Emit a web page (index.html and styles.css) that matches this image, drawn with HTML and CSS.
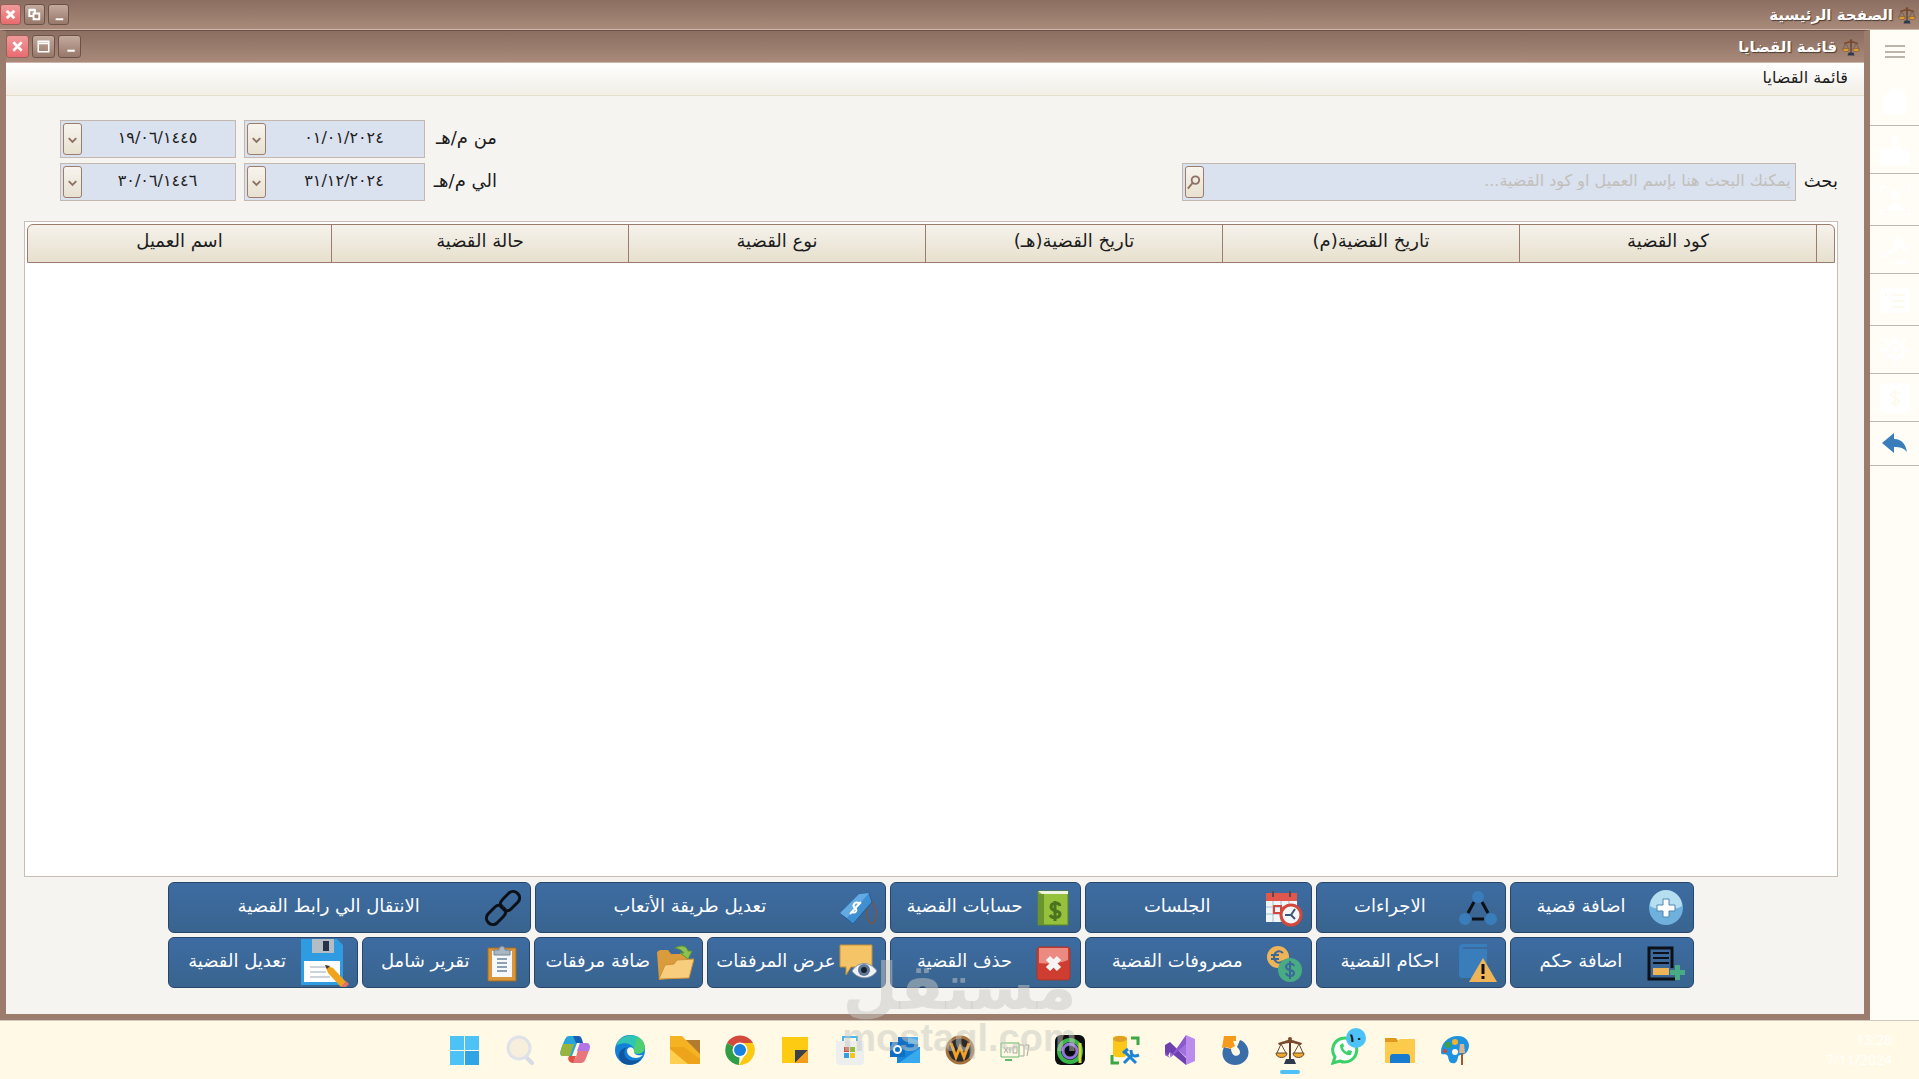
FILE: index.html
```html
<!DOCTYPE html>
<html lang="ar" dir="rtl">

<head>
    <meta charset="UTF-8">
    <title>قائمة القضايا</title>
    <link rel="stylesheet" href="styles.css">
</head>

<body>
    <!-- shared scales icon -->
    <svg class="defs" width="0" height="0">
        <symbol id="scales" viewBox="0 0 30 30">
            <path d="M14 3h2v22h-2z" fill="#5b3a29" />
            <path d="M3 8c5-1 7-3 12-3s7 2 12 3l-1 2c-5-1-7-2-11-2s-6 1-11 2z" fill="#7a4a2c" />
            <path d="M6 9L2 18M6 9l5 9M24 9l-5 9M24 9l4 9" stroke="#6b4a33" stroke-width="1" fill="none" />
            <path d="M1 18h11c0 6-11 6-11 0zM18 18h11c0 6-11 6-11 0z" fill="#f0a92b" stroke="#6b4a33" />
            <circle cx="15" cy="4" r="2" fill="#7a4a2c" />
            <path d="M11 24h8l2 5H9z" fill="#2c3a4b" />
        </symbol>
    </svg>

    <header class="titlebar">
        <svg class="title-icon"><use href="#scales" /></svg>
        <h1>الصفحة الرئيسية</h1>
        <div class="window-controls small">
            <button type="button" aria-label="تصغير"><svg viewBox="0 0 20 20"><path d="M7 15h8" stroke="#fff" stroke-width="2" /></svg></button>
            <button type="button" aria-label="استعادة"><svg viewBox="0 0 20 20"><path d="M4.500 5.500h6v6h-6zM4 5h7" stroke="#fff" stroke-width="2" fill="none" /><path d="M9 9h6v6H9z" fill="#a58474" stroke="#fff" stroke-width="2" /></svg></button>
            <button type="button" class="close" aria-label="إغلاق"><svg viewBox="0 0 20 20"><path d="M6 6l8 8M14 6l-8 8" stroke="#fff" stroke-width="3" /></svg></button>
        </div>
    </header>

    <div class="workspace">
        <nav class="sidebar">
            <a href="#" class="menu" aria-label="القائمة"><svg viewBox="0 0 32 32"><path d="M6 10h20M6 16h20M6 21h20" stroke="#bbb5ac" stroke-width="2" /></svg></a>
            <a href="#" class="tall" aria-label="الرئيسية"><svg viewBox="0 0 32 32"><path d="M16 2l6 5V5h4v6l2 3v16H4V13z" /></svg></a>
            <a href="#" aria-label="العملاء"><svg viewBox="0 0 32 32"><circle cx="16" cy="6" r="4" /><path d="M10 15c0-6 12-6 12 0h9v16H1V15z" /></svg></a>
            <a href="#" class="tall" aria-label="الموظفين"><svg viewBox="0 0 32 32"><circle cx="16" cy="11" r="5" /><path d="M8 27c0-5 4-5 6-8h4c2 3 6 3 6 8z" /><path d="M2 8V3h5M25 3h5v5M2 25v5h5M25 30h5v-5" fill="none" stroke="#fff" stroke-width="2" /></svg></a>
            <a href="#" aria-label="القضايا"><svg viewBox="0 0 32 32"><path d="M14 6l6-4 10 12-5 4-3-5L3 25l-2-3 16-10zM17 27h14v3H17z" /></svg></a>
            <a href="#" class="tall" aria-label="التقارير"><svg viewBox="0 0 32 32"><rect x="1" y="4" width="30" height="25" rx="3" /><path d="M13 11h13M13 17h13M13 23h13M7 9v3" stroke="#fffaee" stroke-width="2" /></svg></a>
            <a href="#" aria-label="الإعدادات"><svg viewBox="0 0 32 32"><circle cx="16" cy="16" r="8" fill="none" stroke="#fff" stroke-width="3" /><circle cx="16" cy="16" r="3" /><path d="M16 1v6M16 25v6M1 16h6M25 16h6M5 5l5 5M22 22l5 5M27 5l-5 5M10 22l-5 5" stroke="#fff" stroke-width="3" /></svg></a>
            <a href="#" aria-label="الحسابات"><svg viewBox="0 0 32 32"><rect x="1" y="1" width="30" height="30" rx="5" /><path d="M20 12c-1-3-8-3-8 1s8 2 8 6-7 4-8 1M16 8v16" fill="none" stroke="#fffaee" stroke-width="2" /></svg></a>
            <a href="#" class="menu back" aria-label="رجوع"><svg viewBox="0 0 32 32"><path d="M3 15L15 5v6c9 0 12 7 13 13-3-4-7-5-13-5v6z" fill="#3a7dbb" /></svg></a>
        </nav>

        <main class="window">
            <header class="titlebar inner">
                <svg class="title-icon"><use href="#scales" /></svg>
                <h2>قائمة القضايا</h2>
                <div class="window-controls">
                    <button type="button" aria-label="تصغير"><svg viewBox="0 0 20 20"><path d="M8 14h7" stroke="#fff" stroke-width="2" /></svg></button>
                    <button type="button" aria-label="تكبير"><svg viewBox="0 0 20 20"><path d="M5 5h10v10H5zM5 7h10" stroke="#fff" stroke-width="1.500" fill="none" /></svg></button>
                    <button type="button" class="close" aria-label="إغلاق"><svg viewBox="0 0 20 20"><path d="M6 6l8 8M14 6l-8 8" stroke="#fff" stroke-width="2.500" /></svg></button>
                </div>
            </header>
            <div class="menubar">قائمة القضايا</div>

            <div class="content">
                <form class="filters">
                    <div class="search">
                        <label for="search">بحث</label>
                        <div class="field">
                            <input type="text" id="search" placeholder="يمكنك البحث هنا بإسم العميل او كود القضية...">
                            <button type="button" aria-label="بحث"><svg viewBox="0 0 18 30"><circle cx="10" cy="13" r="4" /><path d="M7 16l-5 6" /></svg></button>
                        </div>
                    </div>
                    <div class="dates">
                        <label for="from">من م/هـ</label>
                        <div class="field">
                            <input type="text" id="from" value="٠١/٠١/٢٠٢٤">
                            <button type="button" aria-label="اختيار"><svg viewBox="0 0 18 30"><path d="M5 14l4 4 4-4" /></svg></button>
                        </div>
                        <div class="field">
                            <input type="text" aria-label="من هـ" value="١٩/٠٦/١٤٤٥">
                            <button type="button" aria-label="اختيار"><svg viewBox="0 0 18 30"><path d="M5 14l4 4 4-4" /></svg></button>
                        </div>
                        <label for="to">الي م/هـ</label>
                        <div class="field">
                            <input type="text" id="to" value="٣١/١٢/٢٠٢٤">
                            <button type="button" aria-label="اختيار"><svg viewBox="0 0 18 30"><path d="M5 14l4 4 4-4" /></svg></button>
                        </div>
                        <div class="field">
                            <input type="text" aria-label="الي هـ" value="٣٠/٠٦/١٤٤٦">
                            <button type="button" aria-label="اختيار"><svg viewBox="0 0 18 30"><path d="M5 14l4 4 4-4" /></svg></button>
                        </div>
                    </div>
                </form>

                <div class="grid">
                    <table>
                        <thead>
                            <tr>
                                <th class="selector"></th>
                                <th>كود القضية</th>
                                <th>تاريخ القضية(م)</th>
                                <th>تاريخ القضية(هـ)</th>
                                <th>نوع القضية</th>
                                <th>حالة القضية</th>
                                <th>اسم العميل</th>
                            </tr>
                        </thead>
                    </table>
                </div>

                <div class="actions">
                    <div class="row">
                        <button type="button" class="w184"><svg viewBox="0 0 38 38"><circle cx="19" cy="19" r="17" fill="#6fb1dc" /><path d="M3 17a16 16 0 0 1 32 0c-8 5-24 5-32 0z" fill="#b5dff0" /><path d="M16 10h6v6h6v6h-6v6h-6v-6h-6v-6h6z" fill="#fff" stroke="#4c86b4" /></svg><span>اضافة قضية</span></button>
                        <button type="button" class="w190"><svg viewBox="0 0 38 38"><path d="M15 13l-6 11M23 13l6 11M13 30h12" stroke="#0d1117" stroke-width="3" /><g fill="#3a7dbb"><circle cx="19" cy="8" r="6" /><circle cx="6" cy="30" r="6" /><circle cx="32" cy="30" r="6" /></g></svg><span>الاجراءات</span></button>
                        <button type="button" class="w227"><svg viewBox="0 0 38 38"><path d="M1 5h31v28H1z" fill="#f2f5f8" /><path d="M1 4h31v8H1z" fill="#e2574c" /><path d="M8 2v6M25 2v6" stroke="#5c4a4a" stroke-width="2" /><path d="M1 18h31M1 25h31M8 12v21M16 12v21M24 12v21" stroke="#a9bccb" /><path d="M9 17h7v7H9z" fill="none" stroke="#d4483c" stroke-width="2" /><circle cx="26" cy="26" r="10" fill="#f4f7fa" stroke="#d4483c" stroke-width="3" /><path d="M30 20l-4 6h-6M26 26l4 4" stroke="#3c5675" stroke-width="2" fill="none" /></svg><span>الجلسات</span></button>
                        <button type="button" class="w190"><svg viewBox="0 0 38 38"><path d="M4 2h30v34H4z" fill="#96c13c" stroke="#5d8427" /><path d="M4 2h30v3H8z" fill="#eef3e2" /><path d="M4 5h6v31H4z" fill="#6a9430" /><path d="M26 17c-1-4-9-4-9 1s9 3 9 7-8 5-10 1M21 12v20" stroke="#4c7420" stroke-width="3" fill="none" /></svg><span>حسابات القضية</span></button>
                        <button type="button" class="w351"><svg viewBox="0 0 38 38"><path d="M28 8c9 4 12 24 6 26s-8-12-4-21" fill="none" stroke="#6c5a57" stroke-width="2" /><path d="M1 24L20 5l10-1 3 9-19 22z" fill="#3f8fd3" stroke="#245c95" /><path d="M1 24L20 5l10-1-22 25z" fill="#64aae2" /><path d="M20 14c-5-2-7 3-4 5s1 6-4 4M22 13L11 25" stroke="#fff" stroke-width="2" fill="none" /></svg><span>تعديل طريقة الأتعاب</span></button>
                        <button type="button" class="w363"><svg viewBox="0 0 38 38" fill="none" stroke="#0d1117" stroke-width="3" stroke-linecap="round"><path d="M18 19c-3-3-2-6 1-9l6-6c6-5 14 3 9 9l-7 7c-2 2-5 2-7 1" /><path d="M20 19c3 3 2 6-1 9l-6 6c-6 5-14-3-9-9l7-7c2-2 5-2 7-1" /></svg><span>الانتقال الي رابط القضية</span></button>
                    </div>
                    <div class="row">
                        <button type="button" class="w184"><svg viewBox="0 0 38 38"><path d="M25 24V4H2v31h26" fill="none" stroke="#0d1117" stroke-width="3" /><path d="M6 9h16M6 14h16M6 19h16" stroke="#0d1117" stroke-width="2" /><path d="M6 24h16v7H6z" fill="#efb458" /><path d="M28 21h5v5h5v5h-5v5h-5v-5h-5v-5h5z" fill="#48ab83" /></svg><span>اضافة حكم</span></button>
                        <button type="button" class="w190"><svg viewBox="0 0 38 38"><path d="M0 4q0-4 4-4h24v3H4v2h24v29H3q-3 0-3-3z" fill="#3a7dbb" /><path d="M24 14l14 24H10z" fill="#efb458" /><path d="M24 20v10M24 32v3" stroke="#0d1117" stroke-width="3" /></svg><span>احكام القضية</span></button>
                        <button type="button" class="w227"><svg viewBox="0 0 38 38"><circle cx="13" cy="13" r="11" fill="#efb458" /><path d="M18 9c-5-4-9 0-9 4s4 8 9 4M6 11h8M6 15h8" stroke="#3b6899" stroke-width="2" fill="none" /><circle cx="25" cy="26" r="12" fill="#48ab83" /><path d="M29 22c-1-3-8-3-8 1s8 2 8 6-7 4-8 0M25 17v18" stroke="#3b6899" stroke-width="2" fill="none" /></svg><span>مصروفات القضية</span></button>
                        <button type="button" class="w190"><svg viewBox="0 0 38 38"><rect x="3" y="3" width="33" height="33" rx="3" fill="#cf3d31" stroke="#a3392f" /><path d="M5 4h29v12c-9 4-20 4-29 3z" fill="#ea8a80" /><path d="M14 14l11 11M25 14L14 25" stroke="#f7f3f3" stroke-width="6" /></svg><span>حذف القضية</span></button>
                        <button type="button" class="w179"><svg viewBox="0 0 38 38"><path d="M1 1h32v22H12l-5 8v-8H1z" fill="#f4c467" stroke="#c98f35" /><path d="M13 27c6-10 18-10 25 0-6 9-19 9-25 0z" fill="#eef2f6" stroke="#8593a3" /><circle cx="25" cy="26" r="6" fill="#5f7796" /><circle cx="25" cy="26" r="3" fill="#18222f" /></svg><span>عرض المرفقات</span></button>
                        <button type="button" class="w169"><svg viewBox="0 0 38 38"><path d="M1 8l3-2h8l3 4h18v22L3 36z" fill="#d99b3c" /><path d="M3 35l6-14 9-1 3-4 17-1-5 19z" fill="#f8cd7e" stroke="#cf9136" /><path d="M19 4c8-4 12-1 13 3h4l-4 8-8-6h4c-2-3-5-4-9-5z" fill="#8dc153" stroke="#5f9433" /></svg><span>ضافة مرفقات</span></button>
                        <button type="button" class="w168"><svg viewBox="0 0 38 38"><path d="M5 4h28v33H5z" fill="#d9963b" stroke="#a86a23" /><path d="M9 7h20v26H9z" fill="#f6f8fa" /><path d="M14 15h10M14 19h10M14 23h10M14 27h10" stroke="#8da0b4" stroke-width="2" /><path d="M11 6h5c0-5 6-5 6 0h5v5H11z" fill="#a9b7c4" stroke="#74869a" /></svg><span>تقرير شامل</span></button>
                        <button type="button" class="w190 save"><svg viewBox="0 0 48 48"><path d="M0 0h36l6 6v40H0z" fill="#2f9be0" /><path d="M11 0h22v14H11z" fill="#b4bcc4" /><path d="M22 2h6v10h-6z" fill="#24324b" /><path d="M3 22h36v21H3z" fill="#fff" /><path d="M9 28h20M9 33h16M9 38h20" stroke="#ccd3da" stroke-width="2" /><path d="M24 26l8 3 13 14-5 5-13-14z" fill="#f0a41c" /><path d="M24 26l5 1-3 3z" fill="#3a3a3a" /><path d="M40 48l5-6 3 3-4 4z" fill="#e5706b" /></svg><span>تعديل القضية</span></button>
                    </div>
                </div>
            </div>
        </main>
    </div>

    <footer class="taskbar" dir="ltr">
        <div class="apps">
            <svg viewBox="0 0 30 30"><path d="M0 1h14v14H0zM15 1h14v14H15zM0 16h14v14H0z" fill="#4cc2f6" /><path d="M15 16h14v14H15z" fill="#2fa5e5" /></svg>
            <svg viewBox="0 0 30 30"><path d="M20 21l7 7" stroke="#d7dbe4" stroke-width="4" stroke-linecap="round" /><circle cx="14" cy="13" r="11" fill="#f7eedb" stroke="#dfe2e9" stroke-width="3" /></svg>
            <svg viewBox="0 0 30 30"><path d="M9 1h9l4 7h-5l-5 13H3c-5 0-2-7 0-12s3-8 6-8z" fill="#29a6d9" /><path d="M13 1h6c2 0 3 3 4 7h-7z" fill="#1860b5" /><path d="M3 9h11l-4 12H2c-3-2-1-7 1-12z" fill="#96b43e" /><path d="M20 8h6c5 0 4 5 2 10s-3 10-7 10h-9l4-6z" fill="#e9767c" /><path d="M20 8h6c5 0 4 5 3 8H17z" fill="#b276e6" /><path d="M9 21h7l-3 7c-4 0-6-4-4-7z" fill="#dd5240" /></svg>
            <svg viewBox="0 0 30 30"><circle cx="15" cy="15" r="15" fill="#1380d8" /><path d="M1 11C5-3 28-4 30 12c0 9-12 8-11 4 0-8-12-10-18-5z" fill="#31c3b4" /><path d="M22 2c6 3 9 8 7 13s-11 4-10 1 2-9 3-14z" fill="#4fd06f" /><path d="M12 12c-6 5-2 18 14 12-4 6-16 9-21 1-3-6 0-11 7-13z" fill="#11559f" /><path d="M12 16c0-5 7-5 7 0 0 4 4 5 9 4-6 6-16 2-16-4z" fill="#fff9e6" /></svg>
            <svg viewBox="0 0 30 30"><path d="M14 5h16v20H14z" fill="#b27b2f" /><path d="M0 1h12l18 18v10H0z" fill="#f5b324" /><path d="M0 12l14 0 16 12v5H0z" fill="#eda31a" /><path d="M0 14l18 15H0z" fill="#ffd04f" /></svg>
            <svg viewBox="0 0 30 30"><path d="M15 15L2 8A15 15 0 0 1 28 8z" fill="#d34a3c" /><path d="M15 15L2 8a15 15 0 0 0 12 22z" fill="#2f9e46" /><path d="M15 8h13a15 15 0 0 1-14 22l7-12z" fill="#fbc812" /><circle cx="15" cy="15" r="7.500" fill="#fff" /><circle cx="15" cy="15" r="6" fill="#1a82dc" /></svg>
            <svg viewBox="0 0 30 30"><path d="M2 2h26v26H2z" fill="#fccb12" /><path d="M15 15h13L15 28z" fill="#3c3f45" /><path d="M28 15v13H15z" fill="#f09c1c" /></svg>
            <svg viewBox="0 0 30 30"><path d="M8 9V2h14v7" fill="none" stroke="#4ab6ee" stroke-width="2" /><path d="M1 6h28v20q0 4-4 4H5q-4 0-4-4z" fill="#edeeee" /><path d="M9 12h5v5H9z" fill="#d2473a" /><path d="M15 12h5v5h-5z" fill="#8dbb3a" /><path d="M9 18h5v5H9z" fill="#35a0e0" /><path d="M15 18h5v5h-5z" fill="#f8c51c" /></svg>
            <svg viewBox="0 0 30 30"><path d="M8 2h20v12H8z" fill="#1a6fc4" /><path d="M18 2h10v7H18z" fill="#4ab2ee" /><path d="M7 13l23-1v16H7z" fill="#1487dc" /><path d="M30 13v15H9z" fill="#38a9ec" /><rect y="7" width="15" height="15" fill="#0f6fc5" /><circle cx="7.500" cy="14.500" r="3.500" fill="none" stroke="#fff" stroke-width="2" /></svg>
            <svg viewBox="0 0 30 30"><circle cx="15" cy="15" r="13" fill="#282a30" stroke="#a5713c" stroke-width="3" /><path d="M6 8l5 14 4-10 4 10 5-14" fill="none" stroke="#f0a125" stroke-width="3" /></svg>
            <svg viewBox="0 0 30 30" fill="none"><path d="M1 8h18v14H1z" stroke="#67b56b" /><path d="M5 25h7" stroke="#67b56b" stroke-width="2" /><path d="M20 10h4v11h-4M25 10h4l-2 11M4 12l4 6M8 12l-4 6M10 12v6M13 12h4v6h-4z" stroke="#aaa999" /></svg>
            <svg viewBox="0 0 30 30"><rect width="30" height="30" rx="6" fill="#0c0e12" /><circle cx="15" cy="16" r="11" fill="none" stroke="#39b54a" stroke-width="4" /><circle cx="15" cy="16" r="7" fill="none" stroke="#9272dc" stroke-width="3" /><path d="M25 8v20" stroke="#cfd83a" stroke-width="3" /><circle cx="15" cy="16" r="3" fill="#050607" /></svg>
            <svg viewBox="0 0 30 30"><path d="M3 3c0-3 14-3 14 0v17c0 3-14 3-14 0z" fill="#fbc818" /><ellipse cx="10" cy="4" rx="7" ry="3" fill="#e0a028" /><path d="M21 3h7v7M2 20v8h7" fill="none" stroke="#3ba745" stroke-width="3" /><path d="M14 28l9-9M15 17l11 11" stroke="#1d83d4" stroke-width="3" /><path d="M21 15c0 6 3 7 8 5M13 18l5-4" stroke="#1d83d4" stroke-width="3" fill="none" /></svg>
            <svg viewBox="0 0 30 30"><path d="M5 8l16 14V8L5 22z" fill="#a070dc" /><path d="M0 10l5-3 16 16v7L5 17l-2 4-3-1z" fill="#6e3fae" /><path d="M5 23L21 0v9L5 23l-5-3v-3z" fill="#8d57cf" /><path d="M21 0l9 4v22l-9 4z" fill="#bb8cec" /></svg>
            <svg viewBox="0 0 30 30"><path d="M4 12c-8 18 18 25 24 9 2-7-2-14-8-16l-3 7c9 8-5 14-6 2z" fill="#3b6ea8" /><path d="M4 1l12 0v5h-3l2 5-5 3-3-2-5 1z" fill="#f59a1b" /></svg>
            <span class="active"><svg viewBox="0 0 30 30"><use href="#scales" /></svg></span>
            <span class="whatsapp"><svg viewBox="0 0 30 30"><path d="M3 28l2-6a12 12 0 1 1 5 4z" fill="#fff" stroke="#3bd168" stroke-width="3" /><path d="M10 10c0 6 5 11 11 10l1-4-4-1-1 2c-2-1-3-2-4-4l1-2-1-3z" fill="#3bd168" /></svg><b>١٠</b></span>
            <svg viewBox="0 0 30 30"><path d="M0 3h11l3 4H0z" fill="#e0991c" /><path d="M0 7l12 0 3-3h15v24H0z" fill="#fdcb4c" /><path d="M5 28v-6q0-3 3-3h14q3 0 3 3v6z" fill="#187bd0" /></svg>
            <svg viewBox="0 0 30 30"><path d="M1 17C1 8 8 1 18 1c9 0 13 8 10 14-3 7-9 3-10 7-1 5-2 7-6 6-4 0-3-6-5-8s-6 1-6-3z" fill="#1d93e0" /><circle cx="8" cy="10" r="3" fill="#3ca33f" /><circle cx="15" cy="7" r="3" fill="#f2b32a" /><circle cx="5" cy="16" r="2" fill="#d2473a" /><circle cx="15" cy="17" r="3" fill="#fff9e6" /><path d="M20 9h4l1 9h-6z" fill="#d7b593" /><path d="M21 18h2v12h-2z" fill="#9c5d31" /></svg>
        </div>
        <div class="clock">13:28<br>7/11/2024</div>
    </footer>

    <div class="watermark">
        <strong>مستقل</strong>
        <span>mostaql.com</span>
    </div>
</body>

</html>
```
FILE: styles.css
```css
* {
    box-sizing: border-box;
}

body {
    height: 100vh;
    margin: 0;
    display: flex;
    flex-direction: column;
    font-family: "DejaVu Sans", sans-serif;
    font-size: 18px;
    color: #1c1c1c;
    background: #fff9e6;
    overflow: hidden;
}

button,
input {
    font: inherit;
}

.defs {
    position: absolute;
}

/* Title bars */
.titlebar {
    display: flex;
    align-items: center;
    gap: 5px;
    height: 30px;
    padding: 0 3px 0 0;
    background: linear-gradient(#8b6e61, #a98a7a);
    border-bottom: 1px solid #cdb5a8;
}

.titlebar.inner {
    height: 32px;
    padding: 0 4px 0 0;
}

.title-icon {
    width: 18px;
    height: 18px;
}

.titlebar h1,
.titlebar h2 {
    margin: 0;
    font-size: 15px;
    line-height: 20px;
    color: #fff;
    text-shadow: 1px 1px 1px #4d3a31;
}

.window-controls {
    display: flex;
    gap: 3px;
    margin-right: auto;
}

.window-controls button {
    width: 23px;
    height: 23px;
    padding: 0;
    border: 1px solid #6b5248;
    border-radius: 3px;
    background: linear-gradient(#c3aa9d, #97786a);
}

.window-controls.small button {
    width: 21px;
    height: 21px;
}

.window-controls .close {
    background: linear-gradient(#f09a9a, #e86b6f);
    border-color: #93605a;
}

.window-controls svg {
    display: block;
    width: 100%;
    height: 100%;
}

/* Sidebar */
.workspace {
    flex: 1;
    display: flex;
    min-height: 0;
}

.sidebar {
    width: 49px;
    background: #fffdf5;
}

.sidebar a {
    display: flex;
    align-items: center;
    justify-content: center;
    height: 48px;
    border-bottom: 1px solid #bdb8b0;
}

.sidebar a.menu {
    height: 44px;
    border-bottom-color: transparent;
}

.sidebar a.tall {
    height: 52px;
}

.sidebar a.back {
    border-bottom-color: #bdb8b0;
}

.sidebar svg {
    width: 32px;
    height: 32px;
    fill: #fff;
}

/* Inner window */
.window {
    flex: 1;
    display: flex;
    flex-direction: column;
    border: solid #9c7c6d;
    border-width: 1px 6px 6px;
    border-top-color: #6b5248;
    background: #f6f4f0;
}

.menubar {
    height: 33px;
    padding: 0 16px;
    line-height: 30px;
    font-size: 16px;
    background: linear-gradient(#fff, #f1eee6);
    border-bottom: 1px solid #e6dfcb;
}

.content {
    flex: 1;
    display: flex;
    flex-direction: column;
    padding: 24px 26px 26px 18px;
}

.filters {
    display: flex;
    justify-content: space-between;
    align-items: flex-end;
    margin-bottom: 20px;
    padding-left: 36px;
}

.search {
    display: flex;
    align-items: center;
    gap: 8px;
}

.search .field {
    width: 32vw;
}

.dates {
    display: grid;
    grid-template-columns: 64px 181px 176px;
    align-items: center;
    gap: 5px 8px;
}

.filters label {
    padding-bottom: 4px;
}

.field {
    display: flex;
    height: 38px;
    padding: 2px;
    background: #dae1ef;
    border: 1px solid #c3b7ae;
}

.field input {
    flex: 1;
    min-width: 0;
    padding: 0 2px 4px;
    border: 0;
    background: none;
    font-size: 16px;
    color: #1c1c1c;
}

.dates input {
    text-align: center;
}

.field input::placeholder {
    color: #c2bfba;
    opacity: 1;
}

.field button {
    width: 19px;
    padding: 0;
    border: 1px solid #9c7c6d;
    border-radius: 3px;
    background: linear-gradient(#f7f4ee, #e8e1d0);
}

.field svg {
    display: block;
    width: 100%;
    height: 30px;
    fill: none;
    stroke: #8f7164;
    stroke-width: 2;
}

/* Cases table */
.grid {
    flex: 1;
    padding: 2px;
    background: #fff;
    border: 1px solid #c9bdb5;
}

.grid table {
    width: 100%;
    table-layout: fixed;
    border-collapse: separate;
    border-spacing: 0;
    border: 1px solid #9c7c6d;
    border-radius: 6px 6px 0 0;
    background: linear-gradient(#f5f2ec, #e7e0cd);
}

.grid th {
    height: 37px;
    padding: 0 0 6px;
    font-weight: normal;
    line-height: 24px;
    border-left: 1px solid #9c7c6d;
}

.grid th:last-child {
    width: 303px;
    border-left: 0;
}

.grid .selector {
    width: 18px;
}

/* Action buttons */
.actions {
    display: flex;
    flex-direction: column;
    gap: 4px;
    margin-top: 5px;
    padding: 0 144px;
}

.row {
    display: flex;
    gap: 4px;
}

.row button {
    display: flex;
    align-items: center;
    min-width: 0;
    height: 51px;
    padding: 0 8px 0 4px;
    border: 1px solid #27466b;
    border-radius: 6px;
    background: linear-gradient(#3d6ca2, #39648f);
    color: #fff;
    overflow: hidden;
}

.row svg {
    flex: none;
    width: 38px;
    height: 38px;
}

.row .save svg {
    width: 48px;
    height: 48px;
}

.row span {
    flex: 1;
    padding-bottom: 4px;
    text-align: center;
    white-space: nowrap;
}

/* proportional widths */
.w168 { flex: 168 1 168px; }
.w169 { flex: 169 1 169px; }
.w179 { flex: 179 1 179px; }
.w184 { flex: 184 1 184px; }
.w190 { flex: 190 1 190px; }
.w227 { flex: 227 1 227px; }
.w351 { flex: 351 1 351px; }
.w363 { flex: 363 1 363px; }

/* Taskbar */
.taskbar {
    display: grid;
    grid-template-columns: 1fr auto 1fr;
    align-items: center;
    height: 59px;
    background: #fff9e6;
    border-top: 1px solid #cfcac0;
}

.apps {
    grid-column: 2;
    display: flex;
    gap: 25px;
}

.apps svg {
    display: block;
    width: 30px;
    height: 30px;
}

.active,
.whatsapp {
    position: relative;
}

.active::after {
    content: "";
    position: absolute;
    left: 5px;
    bottom: -9px;
    width: 20px;
    height: 4px;
    border-radius: 2px;
    background: #4cc2f6;
}

.whatsapp b {
    position: absolute;
    top: -7px;
    right: -6px;
    width: 20px;
    height: 20px;
    border-radius: 50%;
    background: #4cc2f6;
    font-size: 12px;
    line-height: 20px;
    text-align: center;
}

.clock {
    padding-right: 27px;
    font-family: "Open Sans", sans-serif;
    font-size: 14px;
    line-height: 20px;
    text-align: right;
    color: #fff;
}

.watermark {
    position: absolute;
    left: 50%;
    bottom: 22px;
    width: 240px;
    margin-left: -120px;
    text-align: center;
    color: rgba(200, 200, 195, 0.5);
    pointer-events: none;
}

.watermark strong {
    display: block;
    font-size: 64px;
    line-height: 64px;
}

.watermark span {
    display: block;
    font: bold 38px/38px "Liberation Sans", sans-serif;
}
```
